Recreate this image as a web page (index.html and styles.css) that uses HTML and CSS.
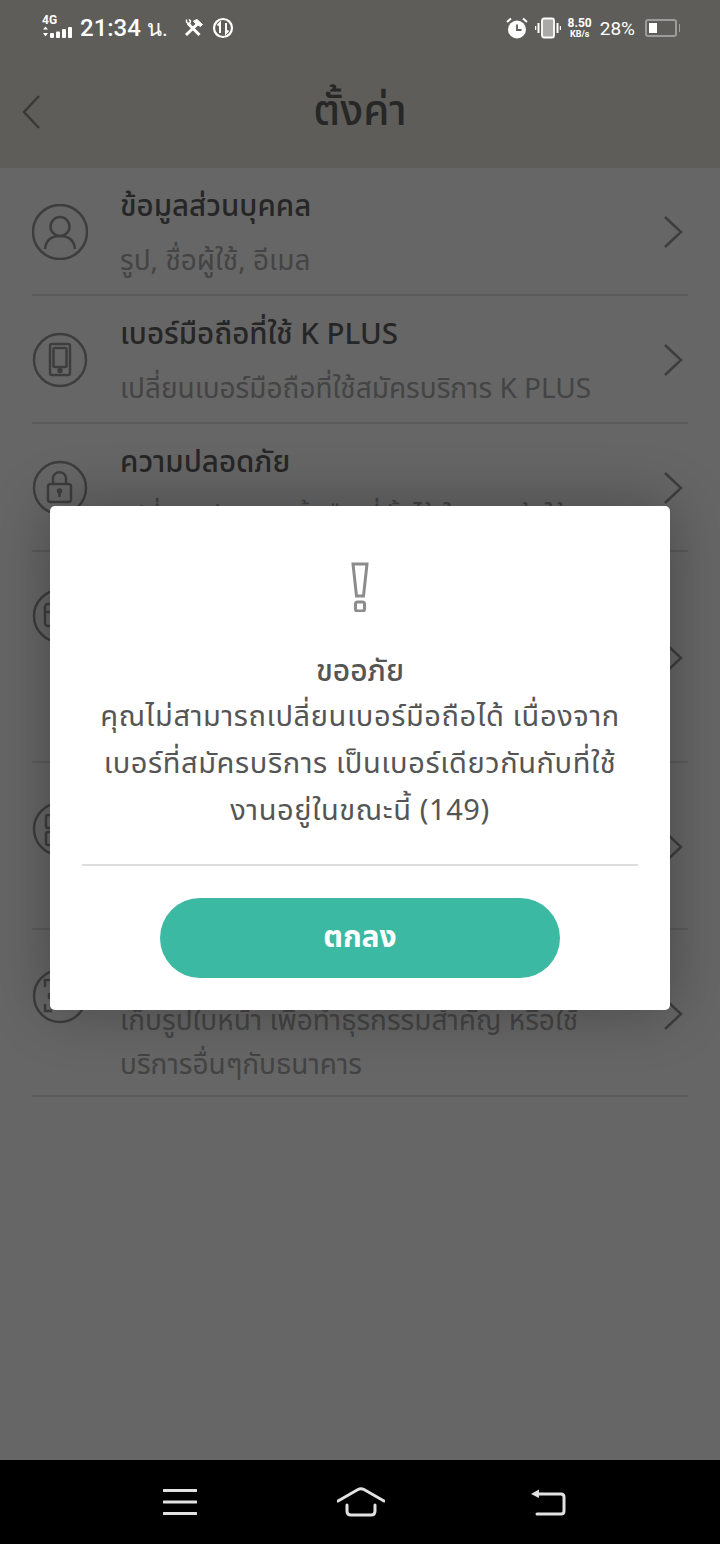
FILE: index.html
```html
<!DOCTYPE html>
<html lang="th">
<head>
  <meta charset="UTF-8" />
  <meta name="viewport" content="width=device-width, initial-scale=1.0" />
  <title>ตั้งค่า</title>
  <link rel="stylesheet" href="styles.css">
</head>
<body>
  <div class="screen">
    <div class="app">
      <header class="topbar">
        <svg class="back-icon" width="22" height="36" viewBox="0 0 22 36"><path d="M18 2 L3 18 L18 34" /></svg>
        <h1 class="topbar-title">ตั้งค่า</h1>
      </header>

      <div class="settings-list">
        <div class="row">
          <svg class="row-icon" viewBox="0 0 56 56"><circle cx="28" cy="28" r="27"/><circle cx="28" cy="22.500" r="9.500"/><path d="M13 45 C14 36 20 32 28 32 C36 32 42 36 43 45"/></svg>
          <div class="row-text">
            <div class="row-title">ข้อมูลส่วนบุคคล</div>
            <div class="row-sub">รูป, ชื่อผู้ใช้, อีเมล</div>
          </div>
          <svg class="chevron" width="20" height="34" viewBox="0 0 20 34"><path d="M2 2 L18 17 L2 32"/></svg>
        </div>
        <div class="row">
          <svg class="row-icon" viewBox="0 0 56 56"><circle cx="28" cy="28" r="26"/><rect x="18" y="12" width="20" height="31" rx="2"/><rect x="21.500" y="16" width="13" height="19" rx="1"/><circle cx="28" cy="38.500" r="1.500"/></svg>
          <div class="row-text">
            <div class="row-title">เบอร์มือถือที่ใช้ K PLUS</div>
            <div class="row-sub">เปลี่ยนเบอร์มือถือที่ใช้สมัครบริการ K PLUS</div>
          </div>
          <svg class="chevron" width="20" height="34" viewBox="0 0 20 34"><path d="M2 2 L18 17 L2 32"/></svg>
        </div>
        <div class="row">
          <svg class="row-icon" viewBox="0 0 56 56"><circle cx="28" cy="28" r="26"/><rect x="16" y="24" width="23" height="18" rx="2.500"/><path d="M21 24 V19 C21 10 34 10 34 19 V24"/><circle cx="27.500" cy="31" r="1.500"/><path d="M27.500 32 V37"/></svg>
          <div class="row-text">
            <div class="row-title">ความปลอดภัย</div>
            <div class="row-sub">เปลี่ยนรหัส ลายนิ้วมือ ที่ตั้งไว้ ในการเข้าใช้</div>
          </div>
          <svg class="chevron" width="20" height="34" viewBox="0 0 20 34"><path d="M2 2 L18 17 L2 32"/></svg>
        </div>
        <div class="row row-large">
          <svg class="row-icon" viewBox="0 0 56 56"><circle cx="28" cy="28" r="26"/><rect x="13" y="16" width="30" height="22" rx="3"/><path d="M13 24 H43"/></svg>
          <div class="row-text"></div>
          <svg class="chevron" width="20" height="34" viewBox="0 0 20 34"><path d="M2 2 L18 17 L2 32"/></svg>
        </div>
        <div class="row row-medium">
          <svg class="row-icon" viewBox="0 0 56 56"><circle cx="28" cy="28" r="26"/><rect x="14" y="14" width="12" height="13" rx="2"/><rect x="14" y="31" width="12" height="13" rx="2"/></svg>
          <div class="row-text"></div>
          <svg class="chevron" width="20" height="34" viewBox="0 0 20 34"><path d="M2 2 L18 17 L2 32"/></svg>
        </div>
        <div class="row row-medium row-face">
          <svg class="row-icon" viewBox="0 0 56 56"><circle cx="28" cy="28" r="26"/><path d="M13 19 V12 H20 M13 36 V43 H20 M17 25 V31"/></svg>
          <div class="row-text">
            <div class="row-sub">เก็บรูปใบหน้า เพื่อทำธุรกรรมสำคัญ หรือใช้</div>
            <div class="row-sub">บริการอื่นๆกับธนาคาร</div>
          </div>
          <svg class="chevron" width="20" height="34" viewBox="0 0 20 34"><path d="M2 2 L18 17 L2 32"/></svg>
        </div>
      </div>

      <div class="overlay"></div>

      <div class="statusbar">
        <div class="status-left">
          <div class="net">
            <span class="net-label">4G</span>
            <svg width="32" height="12" viewBox="0 0 32 12" fill="#fff"><path d="M1 3.500 L3.500 0.500 L6 3.500Z M1 7 L6 7 L3.500 10.500Z"/><rect x="8" y="7" width="4" height="5" rx="1"/><rect x="14" y="5.500" width="4" height="6.500" rx="1"/><rect x="20" y="3" width="4" height="9" rx="1"/><rect x="26" y="1" width="4" height="11" rx="1"/></svg>
          </div>
          <span class="clock">21:34</span>
          <span class="clock-unit">น.</span>
          <svg class="tools" width="20" height="18" viewBox="0 0 20 18" fill="none" stroke="#fff"><path d="M5 4.500 L16.500 16" stroke-width="3"/><path d="M3.500 0.500 L3.500 3 L5 4.500 L7 4 L7.500 2 L6 0.500" stroke-width="1.500"/><path d="M14.500 5 L3 16" stroke-width="3"/><path d="M10.500 2 L14 0.500 L19.500 5.500 L17.500 7.500 L14 5.500 L12.500 4.500Z" fill="#fff" stroke-width="1"/></svg>
          <svg class="data-icon" width="22" height="22" viewBox="0 0 22 22" fill="none" stroke="#fff"><circle cx="11" cy="11" r="9" stroke-width="2.200"/><path d="M8 16 V6 L5.500 8.500 M14 6 V16 L16.500 13.500" stroke-width="2"/></svg>
        </div>
        <div class="status-right">
          <svg class="alarm" width="22" height="22" viewBox="0 0 22 22"><circle cx="11" cy="12.500" r="9" fill="#fff"/><path d="M11 7.500 V13 H15.500" fill="none" stroke="#5e5d59" stroke-width="1.800"/><path d="M1 5 L5 1.500 M21 5 L17 1.500" stroke="#fff" stroke-width="2"/></svg>
          <svg class="vibrate" width="26" height="22" viewBox="0 0 26 22"><rect x="7" y="1.500" width="12" height="19" rx="2" fill="#a9a9a7" stroke="#fff" stroke-width="1.800"/><path d="M3.500 6 V16 M22.500 6 V16" stroke="#fff" stroke-width="2"/><path d="M0.500 9 V13 M25.500 9 V13" stroke="#fff" stroke-width="1.500"/></svg>
          <div class="speed"><span>8.50</span><span class="speed-unit">KB/s</span></div>
          <span class="battery-pct">28%</span>
          <div class="battery"><div class="battery-fill"></div></div>
        </div>
      </div>

      <div class="dialog">
        <svg class="dialog-icon" width="18" height="50" viewBox="0 0 18 50"><path d="M2 2 H16 L12.500 34 H5.500 Z"/><rect x="4.500" y="40" width="9" height="9" rx="2"/></svg>
        <div class="dialog-title">ขออภัย</div>
        <p class="dialog-text">คุณไม่สามารถเปลี่ยนเบอร์มือถือได้ เนื่องจาก<br>เบอร์ที่สมัครบริการ เป็นเบอร์เดียวกันกับที่ใช้<br>งานอยู่ในขณะนี้ (149)</p>
        <hr class="dialog-line">
        <button class="dialog-button">ตกลง</button>
      </div>
    </div>

    <nav class="softkeys">
      <svg width="34" height="28" viewBox="0 0 34 28"><path d="M1 2.500 H33 M1 14 H33 M1 25.500 H33"/></svg>
      <svg class="key-home" width="48" height="30" viewBox="0 0 48 30"><path d="M1 14 L21 2.500 Q24 1 27 2.500 L47 14"/><path d="M10 18 V24 Q10 28 14 28 H34 Q38 28 38 24 V18"/></svg>
      <svg width="36" height="28" viewBox="0 0 36 28" class="key-back"><path d="M6 6 H31 Q34 6 34 9 V23 Q34 26 31 26 H7"/><path d="M1 6 L9 1.500 V10Z" class="key-back-tip"/></svg>
    </nav>
  </div>
</body>
</html>
```

FILE: styles.css
```css
body {
  margin: 0;
  padding: 0;
  background-color: #000;
  font-family: 'Noto Sans', 'Noto Sans Thai', 'Open Sans', sans-serif;
}

.screen {
  width: 720px;
  height: 1544px;
  display: flex;
  flex-direction: column;
  overflow: hidden;
}

.app {
  position: relative;
  flex: 1;
  background-color: white;
}

.topbar {
  height: 168px;
  box-sizing: border-box;
  padding-top: 56px;
  background-color: #ebe8de;
  display: flex;
  align-items: center;
  justify-content: center;
  position: relative;
}

.back-icon {
  position: absolute;
  left: 21px;
  top: 94px;
  fill: none;
  stroke: #8f8f8f;
  stroke-width: 2.500;
}

.topbar-title {
  margin: 0;
  font-size: 42px;
  font-weight: 500;
  color: #626262;
}

.settings-list {
  padding: 0 32px;
}

.row {
  display: flex;
  align-items: flex-start;
  height: 128px;
  box-sizing: border-box;
  border-bottom: 2px solid #e4e4e4;
  position: relative;
}

.row-large {
  height: 211px;
}

.row-medium {
  height: 167px;
}

.row-icon {
  width: 56px;
  height: 56px;
  margin-top: 36px;
  flex-shrink: 0;
  fill: none;
  stroke: #999;
  stroke-width: 2.500;
}

.row-medium .row-icon {
  margin-top: 38px;
}

.row-text {
  margin-left: 32px;
  padding-top: 15px;
}

.row-face .row-text {
  padding-top: 67px;
}

.row-title {
  font-size: 29.500px;
  font-weight: 500;
  line-height: 44px;
  margin-bottom: 10px;
  color: #606060;
}

.row-sub {
  font-size: 28px;
  line-height: 44px;
  color: #aaa;
}

.chevron {
  position: absolute;
  right: 5px;
  top: 50%;
  margin-top: -16px;
  fill: none;
  stroke: #999;
  stroke-width: 2.500;
}

.overlay {
  position: absolute;
  top: 0;
  left: 0;
  right: 0;
  bottom: 0;
  background-color: rgba(0, 0, 0, 0.6);
}

.statusbar {
  position: absolute;
  top: 12px;
  left: 42px;
  right: 43px;
  height: 32px;
  display: flex;
  justify-content: space-between;
  align-items: center;
  color: white;
  font-family: Roboto, sans-serif;
}

.status-left,
.status-right {
  display: flex;
  align-items: center;
}

.net {
  width: 32px;
  display: flex;
  flex-direction: column;
  margin-top: -3px;
}

.net-label {
  font-size: 12px;
  font-weight: 700;
  line-height: 11px;
}

.clock {
  margin-left: 6px;
  font-size: 24px;
  font-weight: 500;
}

.clock-unit {
  margin-left: 6px;
  font-size: 22px;
}

.tools {
  margin-left: 15px;
}

.data-icon {
  margin-left: 9px;
}

.alarm {
  margin-right: 7px;
}

.speed {
  display: flex;
  flex-direction: column;
  align-items: center;
  font-size: 12px;
  font-weight: 700;
  line-height: 11px;
  margin-left: 7px;
}

.speed-unit {
  font-size: 9px;
  line-height: 10px;
}

.battery-pct {
  margin-left: 8px;
  font-size: 19px;
}

.battery {
  margin-left: 10px;
  width: 32px;
  height: 18px;
  padding: 2px;
  box-sizing: border-box;
  border: 2px solid #9c9c9a;
  border-radius: 3px;
  position: relative;
}

.battery::after {
  content: "";
  position: absolute;
  right: -5px;
  top: 3px;
  width: 1px;
  height: 8px;
  background-color: #9c9c9a;
}

.battery-fill {
  width: 8px;
  height: 100%;
  background-color: white;
}

.dialog {
  position: absolute;
  left: 50px;
  top: 506px;
  width: 620px;
  height: 504px;
  background-color: white;
  border-radius: 5px;
  box-shadow: 0 0 60px rgba(0, 0, 0, 0.3);
  display: flex;
  flex-direction: column;
  align-items: center;
  box-sizing: border-box;
  padding-top: 56px;
  color: #555;
}

.dialog-icon {
  fill: none;
  stroke: #8c8c8c;
  stroke-width: 3;
  flex-shrink: 0;
}

.dialog-title {
  margin-top: 38px;
  font-size: 30px;
  font-weight: 500;
  line-height: 40px;
}

.dialog-text {
  margin: 1px 0 0;
  font-size: 29px;
  letter-spacing: 0.600px;
  line-height: 47px;
  text-align: center;
}

.dialog-line {
  width: 556px;
  margin: 32px 0 0;
  border: none;
  border-top: 2px solid #ddd;
}

.dialog-button {
  margin-top: 32px;
  width: 400px;
  height: 80px;
  border: none;
  border-radius: 40px;
  background-color: #3bb9a2;
  color: white;
  font-family: inherit;
  font-size: 30px;
  font-weight: 700;
}

.softkeys {
  height: 84px;
  flex-shrink: 0;
  background-color: black;
  display: flex;
  align-items: center;
  justify-content: space-between;
  padding: 0 154px 0 163px;
}

.softkeys svg {
  fill: none;
  stroke: #e2e2e2;
  stroke-width: 3;
  stroke-linecap: round;
}

.softkeys .key-home {
  margin-right: 6px;
}

.softkeys .key-back-tip {
  fill: #e2e2e2;
  stroke: none;
}
```
